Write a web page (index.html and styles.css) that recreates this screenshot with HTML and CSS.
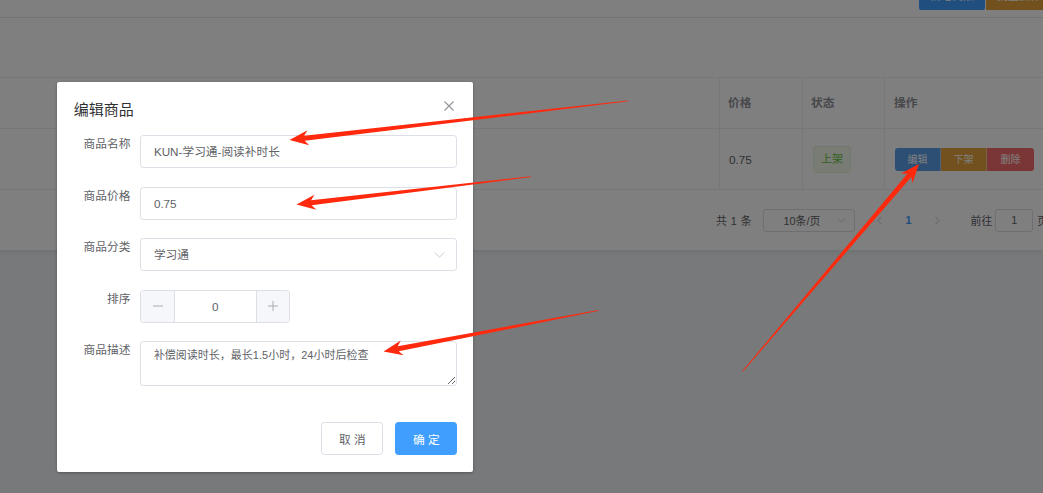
FILE: index.html
```html
<!DOCTYPE html>
<html lang="zh-CN">
<head>
<meta charset="utf-8">
<title>编辑商品</title>
<link rel="stylesheet" href="styles.css">
</head>
<body>
<div class="page">
  <div class="card">
    <div class="topbar">
      <div class="spacer"></div>
      <div class="top-actions">
        <button class="tbtn tbtn-primary">新增商品</button>
        <button class="tbtn tbtn-warning">批量操作</button>
      </div>
    </div>
    <div class="card-gap"></div>
    <div class="table">
      <div class="trow thead">
        <div class="cell"></div>
        <div class="cell">价格</div>
        <div class="cell">状态</div>
        <div class="cell">操作</div>
      </div>
      <div class="trow tbody">
        <div class="cell"></div>
        <div class="cell">0.75</div>
        <div class="cell"><span class="tag">上架</span></div>
        <div class="cell">
          <div class="btn-group">
            <button class="mbtn mbtn-primary">编辑</button>
            <button class="mbtn mbtn-warning">下架</button>
            <button class="mbtn mbtn-danger">删除</button>
          </div>
        </div>
      </div>
    </div>
    <div class="pagination">
      <span class="total">共 1 条</span>
      <span class="sizes">10条/页<svg class="chev" viewBox="0 0 10 6" width="9" height="5"><path d="M0.5 0.5 L5 5 L9.5 0.5" fill="none" stroke="#c0c4cc" stroke-width="1"/></svg></span>
      <span class="pg-arrow prev"><svg viewBox="0 0 6 10" width="5" height="9"><path d="M5.5 0.5 L1 5 L5.5 9.5" fill="none" stroke="#c0c4cc" stroke-width="1.2"/></svg></span>
      <span class="pg-num">1</span>
      <span class="pg-arrow"><svg viewBox="0 0 6 10" width="5" height="9"><path d="M0.5 0.5 L5 5 L0.5 9.5" fill="none" stroke="#c0c4cc" stroke-width="1.2"/></svg></span>
      <span class="jump">前往<span class="jump-box">1</span>页</span>
    </div>
  </div>
</div>

<div class="mask"></div>

<div class="dialog">
  <div class="dialog-header">
    <span class="dialog-title">编辑商品</span>
    <svg class="close" viewBox="0 0 10 10" width="10" height="10"><path d="M0.5 0.5 L9.5 9.5 M9.5 0.5 L0.5 9.5" stroke="#909399" stroke-width="1.1"/></svg>
  </div>
  <div class="dialog-body">
    <div class="form-item">
      <label class="label">商品名称</label>
      <div class="control"><div class="input">KUN-学习通-阅读补时长</div></div>
    </div>
    <div class="form-item">
      <label class="label">商品价格</label>
      <div class="control"><div class="input">0.75</div></div>
    </div>
    <div class="form-item">
      <label class="label">商品分类</label>
      <div class="control"><div class="input select">学习通<svg class="chev" viewBox="0 0 12 7" width="11" height="6"><path d="M0.5 0.5 L6 6 L11.5 0.5" fill="none" stroke="#c0c4cc" stroke-width="1"/></svg></div></div>
    </div>
    <div class="form-item">
      <label class="label">排序</label>
      <div class="control">
        <div class="number">
          <span class="num-btn dec"><svg viewBox="0 0 10 10" width="10" height="10"><path d="M0 5 H10" stroke="#a8abb2" stroke-width="1"/></svg></span>
          <span class="num-val">0</span>
          <span class="num-btn inc"><svg viewBox="0 0 10 10" width="10" height="10"><path d="M0 5 H10 M5 0 V10" stroke="#a8abb2" stroke-width="1"/></svg></span>
        </div>
      </div>
    </div>
    <div class="form-item">
      <label class="label">商品描述</label>
      <div class="control"><textarea class="textarea" readonly>补偿阅读时长，最长1.5小时，24小时后检查</textarea></div>
    </div>
  </div>
  <div class="dialog-footer">
    <button class="btn btn-default">取 消</button>
    <button class="btn btn-primary">确 定</button>
  </div>
</div>

<svg class="arrows" viewBox="0 0 1043 493" width="1043" height="493">
  <g fill="#ff2a0e">
    <polygon transform="translate(289.5 140) rotate(-6.6)" points="0,0 19,-7.5 15,-2.6 341,-0.4 341,0.4 15,2.6 19,7.5"/>
    <polygon transform="translate(296.5 204.5) rotate(-6.8)" points="0,0 19,-7.5 15,-2.6 236,-0.4 236,0.4 15,2.6 19,7.5"/>
    <polygon transform="translate(383.5 351.5) rotate(-10.8)" points="0,0 19,-7.5 15,-2.6 219,-0.4 219,0.4 15,2.6 19,7.5"/>
    <polygon transform="translate(919 164) rotate(130.4)" points="0,0 19,-7.5 15,-2.6 272,-0.4 272,0.4 15,2.6 19,7.5"/>
  </g>
</svg>
</body>
</html>
```

FILE: styles.css
```css
* { box-sizing: border-box; }
html, body { margin: 0; padding: 0; }
body {
  width: 1043px;
  height: 493px;
  overflow: hidden;
  background: #f0f2f5;
  font-family: "Liberation Sans", "Noto Sans CJK SC", sans-serif;
  color: #606266;
  position: relative;
}
button { font-family: inherit; }

.page { width: 1043px; }
.card {
  background: #fff;
  box-shadow: 0 2px 6px rgba(0,0,0,0.08);
}

/* top bar */
.topbar {
  height: 18px;
  border-bottom: 1px solid #e4e7ed;
  display: flex;
  align-items: flex-start;
}
.spacer { flex: 1; }
.top-actions {
  height: 10px;
  display: flex;
  align-items: flex-end;
  overflow: hidden;
  margin-right: -9px;
}
.tbtn {
  flex: none;
  height: 28px;
  width: 66px;
  border: 0;
  padding: 0;
  color: #fff;
  font-size: 11px;
  line-height: 28px;
}
.tbtn-primary { background: #409eff; border-radius: 0 0 2px 2px; }
.tbtn-warning { background: #e6a23c; margin-left: 1px; }

.card-gap { height: 59px; }

/* table */
.table { border-top: 1px solid #ebeef5; }
.trow {
  display: grid;
  grid-template-columns: 720px 83px 82px 1fr;
  border-bottom: 1px solid #ebeef5;
}
.cell {
  border-right: 1px solid #ebeef5;
  padding: 0 8px;
  display: flex;
  align-items: center;
  font-size: 11.7px;
}
.cell:last-child { border-right: 0; padding-left: 9px; }
.thead { height: 51px; }
.thead .cell { color: #909399; font-weight: bold; padding-bottom: 3px; }
.tbody { height: 61px; }
.tbody .cell { color: #606266; padding-left: 9px; }
.tbody .cell:last-child { padding-left: 10px; }
.tag {
  display: inline-block;
  height: 27px;
  line-height: 25px;
  padding: 0 7px;
  font-size: 11px;
  color: #67c23a;
  background: #f0f9eb;
  border: 1px solid #e1f3d8;
  border-radius: 3px;
  margin-left: 1px;
}
.btn-group { display: flex; }
.mbtn {
  height: 23px;
  width: 46px;
  border: 0;
  padding: 0;
  color: #fff;
  font-size: 10px;
  line-height: 23px;
}
.mbtn-primary { background: #5b9ee8; border-radius: 3px 0 0 3px; border-right: 1px solid rgba(255,255,255,0.4); }
.mbtn-warning { background: #e6a23c; border-right: 1px solid rgba(255,255,255,0.4); }
.mbtn-danger { background: #f56c6c; border-radius: 0 3px 3px 0; width: 47px; }

/* pagination */
.pagination {
  height: 60px;
  display: flex;
  align-items: center;
  padding-left: 716px;
  font-size: 10.8px;
  color: #606266;
  white-space: nowrap;
}
.total { margin-right: 11px; word-spacing: 1px; }
.sizes {
  width: 92px;
  height: 23px;
  border: 1px solid #dcdfe6;
  border-radius: 3px;
  display: flex;
  align-items: center;
  padding-left: 20px;
  color: #606266;
  flex: none;
}
.sizes .chev { margin-left: auto; margin-right: 8px; }
.pg-arrow { width: 28px; flex: none; display: flex; justify-content: center; align-items: center; }
.prev { margin-left: 11px; }
.pg-num { width: 30px; flex: none; text-align: center; color: #409eff; font-weight: bold; }
.jump { margin-left: 19px; display: flex; align-items: center; flex: none; }
.jump-box {
  width: 38px;
  height: 23px;
  border: 1px solid #dcdfe6;
  border-radius: 3px;
  margin: 0 4px 0 3px;
  display: flex;
  align-items: center;
  justify-content: center;
}

/* mask */
.mask {
  position: absolute;
  inset: 0;
  background: rgba(0,0,0,0.5);
}

/* dialog */
.dialog {
  position: absolute;
  left: 57px;
  top: 82px;
  width: 416px;
  height: 390px;
  background: #fff;
  border-radius: 2px;
  box-shadow: 0 1px 3px rgba(0,0,0,0.3);
  display: flex;
  flex-direction: column;
}
.dialog-header {
  padding: 16.7px 16.7px 8.3px;
  display: flex;
  align-items: center;
}
.dialog-title {
  flex: 1;
  font-size: 15px;
  line-height: 22px;
  color: #303133;
}
.close { margin-right: 2px; margin-top: -8px; }
.dialog-body { padding: 6px 15.7px 0 16.7px; flex: 1; }
.form-item { display: flex; margin-bottom: 18.3px; }
.label {
  width: 66.7px;
  flex: none;
  padding-right: 10px;
  text-align: right;
  font-size: 11.7px;
  line-height: 17px;
  color: #606266;
}
.control { flex: 1; }
.input {
  height: 33.3px;
  border: 1px solid #dcdfe6;
  border-radius: 3.3px;
  padding: 0 12.5px;
  font-size: 11.7px;
  line-height: 31px;
  color: #606266;
  display: flex;
  align-items: center;
}
.select .chev { margin-left: auto; margin-right: -1px; }
.number {
  width: 150px;
  height: 33.3px;
  border: 1px solid #dcdfe6;
  border-radius: 3.3px;
  display: flex;
  overflow: hidden;
}
.num-btn {
  width: 33.3px;
  background: #f5f7fa;
  display: flex;
  align-items: center;
  justify-content: center;
}
.dec { border-right: 1px solid #dcdfe6; }
.inc { border-left: 1px solid #dcdfe6; }
.num-val {
  flex: 1;
  text-align: center;
  font-size: 11.7px;
  line-height: 31px;
  color: #606266;
}
.textarea {
  display: block;
  width: 100%;
  height: 45px;
  border: 1px solid #dcdfe6;
  border-radius: 3.3px;
  padding: 4px 12.5px;
  font-family: "Liberation Sans", "Noto Sans CJK SC", sans-serif;
  font-size: 11px;
  line-height: 18px;
  color: #606266;
  resize: vertical;
  outline: none;
  margin: 0;
}
.dialog-footer {
  padding: 0 15.7px 16.7px 16.7px;
  display: flex;
  justify-content: flex-end;
  gap: 12px;
}
.btn {
  width: 62px;
  height: 33.3px;
  border-radius: 3.3px;
  font-size: 11.7px;
  padding: 0;
}
.btn-default { background: #fff; border: 1px solid #dcdfe6; color: #606266; }
.btn-primary { background: #409eff; border: 1px solid #409eff; color: #fff; }

/* annotation arrows */
.arrows {
  position: absolute;
  left: 0;
  top: 0;
  pointer-events: none;
}
```
